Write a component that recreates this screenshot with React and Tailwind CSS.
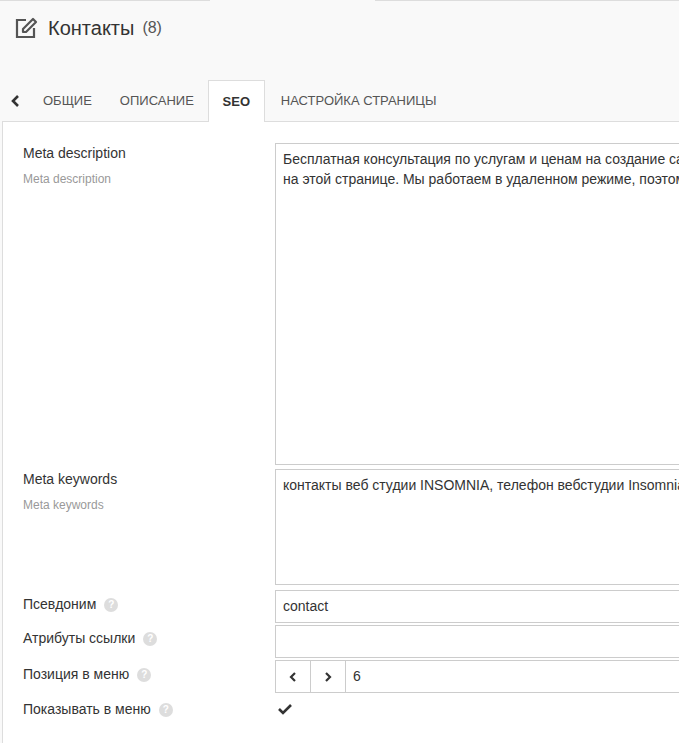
export default function App() {
  const f = { fontFamily: '"Liberation Sans", Arial, sans-serif' };
  const Help = () => (
    <span className="ml-[8px] inline-flex h-[14px] w-[14px] shrink-0 items-center justify-center rounded-full bg-[#ddd] text-[10px] font-bold text-white">?</span>
  );
  return (
    <div style={f} className="h-[743px] w-[679px] overflow-hidden bg-[#f9f9f9] text-[#333]">
      <div className="flex h-[1px]"><div className="w-[210px] bg-[#ddd]" /><div className="w-[165px]" /><div className="flex-1 bg-[#ddd]" /></div>
      <div className="flex h-[54px] items-center pl-[14px]">
        <svg width="24" height="22" viewBox="0 0 24 22" fill="none" stroke="#555" strokeWidth="2.2">
          <path d="M12 3H3v17h17v-9" />
          <path d="M19 2l3 3-10 10H9v-3z" strokeLinejoin="round" />
        </svg>
        <span className="ml-[10px] text-[20px] text-[#333]">Контакты</span>
        <span className="ml-[8px] text-[16px] text-[#555]">(8)</span>
      </div>
      <div className="flex h-[66px] items-end">
        <div className="flex h-[41px] w-[29px] items-center pl-[10px]">
          <svg width="10" height="12" viewBox="0 0 10 12"><path d="M8 1L3 6l5 5" stroke="#333" strokeWidth="2.6" fill="none" /></svg>
        </div>
        {["ОБЩИЕ", "ОПИСАНИЕ"].map((t) => (
          <div key={t} className="flex h-[41px] items-center px-[14px] text-[13px] text-[#555]">{t}</div>
        ))}
        <div className="relative -mb-px flex h-[42px] w-[57px] items-center justify-center border border-b-0 border-[#ddd] bg-white text-[13px] font-bold text-[#333]">SEO</div>
        <div className="flex h-[41px] items-center px-[16px] text-[13px] text-[#555]">НАСТРОЙКА СТРАНИЦЫ</div>
      </div>
      <div className="ml-[2px] h-[700px] border-l border-t border-[#ddd] bg-white pt-[21px]">
        <div className="flex">
          <div className="w-[272px] shrink-0 pl-[20px]">
            <div className="text-[14px]">Meta description</div>
            <div className="mt-[6px] text-[12px] text-[#999]">Meta description</div>
          </div>
          <div className="h-[322px] w-[600px] shrink-0 border border-[#ccc] px-[7px] pt-[5px] text-[14px] leading-[20px] whitespace-nowrap">
            <div>Бесплатная консультация по услугам и ценам на создание сайтов</div>
            <div>на этой странице. Мы работаем в удаленном режиме, поэтому</div>
          </div>
        </div>
        <div className="mt-[4px] flex">
          <div className="w-[272px] shrink-0 pl-[20px]">
            <div className="text-[14px]">Meta keywords</div>
            <div className="mt-[6px] text-[12px] text-[#999]">Meta keywords</div>
          </div>
          <div className="h-[116px] w-[600px] shrink-0 border border-[#ccc] px-[7px] pt-[5px] text-[14px] leading-[20px] whitespace-nowrap">
            контакты веб студии INSOMNIA, телефон вебстудии Insomnia
          </div>
        </div>
        <div className="mt-[5px] flex h-[33px] items-start">
          <div className="flex w-[272px] shrink-0 items-center pl-[20px] pt-[4px] text-[14px]">Псевдоним<Help /></div>
          <div className="flex h-[33px] w-[600px] shrink-0 items-center border border-[#ccc] px-[7px] text-[14px]">contact</div>
        </div>
        <div className="mt-[2px] flex h-[33px] items-start">
          <div className="flex w-[272px] shrink-0 items-center pl-[20px] pt-[3px] text-[14px]">Атрибуты ссылки<Help /></div>
          <div className="h-[33px] w-[600px] shrink-0 border border-[#ccc]" />
        </div>
        <div className="mt-[2px] flex h-[33px] items-start">
          <div className="flex w-[272px] shrink-0 items-center pl-[20px] pt-[4px] text-[14px]">Позиция в меню<Help /></div>
          <div className="flex h-[33px] w-[600px] shrink-0 border border-[#ccc] text-[14px]">
            <div className="flex w-[35px] items-center justify-center border-r border-[#ccc]"><svg width="8" height="10" viewBox="0 0 8 10"><path d="M6 1L2 5l4 4" stroke="#333" strokeWidth="2.2" fill="none" /></svg></div>
            <div className="flex w-[35px] items-center justify-center border-r border-[#ccc]"><svg width="8" height="10" viewBox="0 0 8 10"><path d="M2 1l4 4-4 4" stroke="#333" strokeWidth="2.2" fill="none" /></svg></div>
            <div className="flex items-center pl-[7px]">6</div>
          </div>
        </div>
        <div className="mt-[6px] flex">
          <div className="flex w-[272px] shrink-0 items-center pl-[20px] text-[14px]">Показывать в меню<Help /></div>
          <div className="pl-[3px] pt-[4px]">
            <svg width="14" height="12" viewBox="0 0 14 12"><path d="M1 6l4 4 8-8" stroke="#333" strokeWidth="2.6" fill="none" /></svg>
          </div>
        </div>
      </div>
    </div>
  );
}
